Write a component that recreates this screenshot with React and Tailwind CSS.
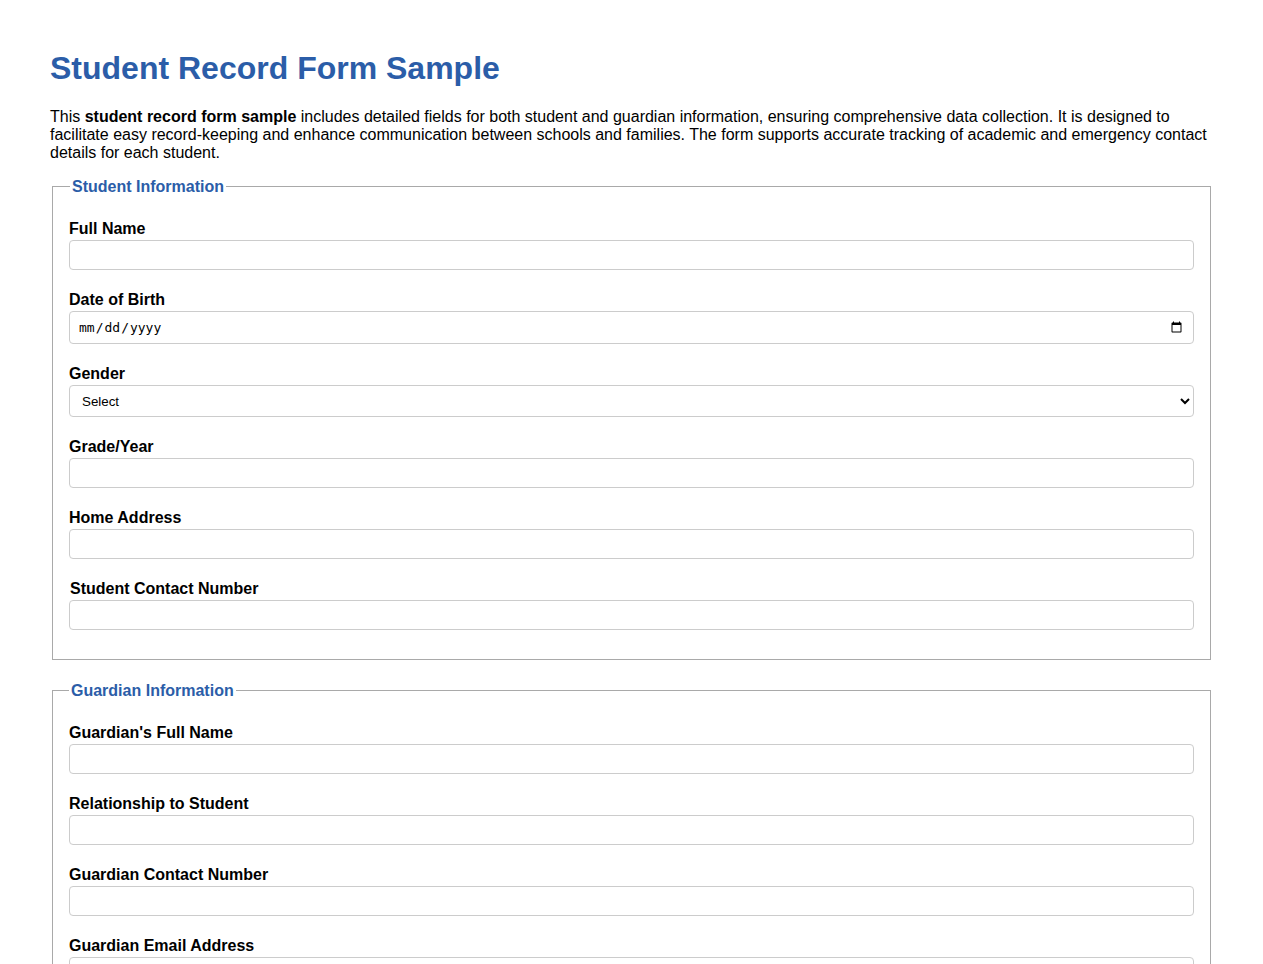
export default function App() {
  const inputCls =
    "block w-full h-[30px] rounded-[4px] border border-[#cccccc] bg-white px-[8px] text-[13px] font-['Liberation_Sans',Arial,sans-serif] text-black outline-none";

  const Field = ({ label, children, className = "" }) => (
    <div className="mb-[21px]">
      <label className={`mb-[2px] block text-[16px] font-bold leading-[18px] text-black ${className}`}>
        {label}
      </label>
      {children}
    </div>
  );

  return (
    <div className="min-h-screen bg-white px-[50px] pt-[50px] pb-[40px] font-['Liberation_Sans',Arial,sans-serif] text-black">
      <h1 className="mb-[21px] text-[32px] font-bold leading-[37px] text-[#2b5da8]">
        Student Record Form Sample
      </h1>
      <p className="mb-[15px] text-[16px] leading-[18px]">
        This <strong className="font-bold">student record form sample</strong> includes detailed fields for both
        student and guardian information, ensuring comprehensive data collection. It is designed to facilitate easy
        record-keeping and enhance communication between schools and families. The form supports accurate tracking of
        academic and emergency contact details for each student.
      </p>

      <form>
        <fieldset className="mx-[2px] mb-[21px] border border-[#a9a9a9] px-[16px] pt-[24px] pb-[8px]">
          <legend className="ml-[1px] px-[2px] text-[16px] font-bold leading-[19px] text-[#2b5da8]">
            Student Information
          </legend>
          <Field label="Full Name">
            <input type="text" className={inputCls} />
          </Field>
          <Field label="Date of Birth">
            <input
              type="date"
              className="block h-[33px] w-full rounded-[4px] border border-[#cccccc] bg-white px-[8px] font-['DejaVu_Sans_Mono',monospace] text-[13px] text-black outline-none"
            />
          </Field>
          <Field label="Gender">
            <select className="block h-[32px] w-full rounded-[4px] border border-[#cccccc] bg-white px-[8px] text-[13.33px] text-black outline-none">
              <option>Select</option>
              <option>Male</option>
              <option>Female</option>
              <option>Other</option>
            </select>
          </Field>
          <Field label="Grade/Year">
            <input type="text" className={inputCls} />
          </Field>
          <Field label="Home Address">
            <input type="text" className={inputCls} />
          </Field>
          <Field label="Student Contact Number" className="pl-[1px]">
            <input type="tel" className={inputCls} />
          </Field>
        </fieldset>

        <fieldset className="mx-[2px] mb-[20px] border border-[#a9a9a9] px-[16px] pt-[24px] pb-[8px]">
          <legend className="px-[2px] text-[16px] font-bold leading-[19px] text-[#2b5da8]">
            Guardian Information
          </legend>
          <Field label="Guardian's Full Name">
            <input type="text" className={inputCls} />
          </Field>
          <Field label="Relationship to Student">
            <input type="text" className={inputCls} />
          </Field>
          <Field label="Guardian Contact Number">
            <input type="tel" className={inputCls} />
          </Field>
          <Field label="Guardian Email Address">
            <input type="email" className={inputCls} />
          </Field>
        </fieldset>
      </form>
    </div>
  );
}
